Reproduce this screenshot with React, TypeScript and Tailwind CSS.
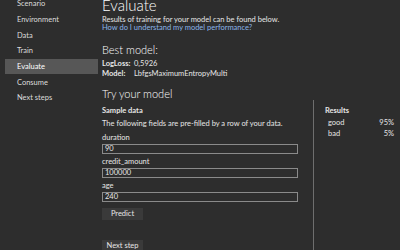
const steps = ['Scenario', 'Environment', 'Data', 'Train', 'Evaluate', 'Consume', 'Next steps'];

const fields = [
  { label: 'duration', value: '90' },
  { label: 'credit_amount', value: '100000' },
  { label: 'age', value: '240' },
];

const results = [
  { label: 'good', value: '95%' },
  { label: 'bad', value: '5%' },
];

export default function App() {
  return (
    <div
      className="flex w-[400px] h-[250px] overflow-hidden bg-[#2d2d2d] text-[#e6e6e6]"
      style={{ fontFamily: 'Lato, "Open Sans", sans-serif' }}
    >
      {/* left nav */}
      <div className="w-[98px] shrink-0 pl-[5px] mt-[-4px]">
        {steps.map((s) => (
          <div
            key={s}
            className={`h-[15.7px] flex items-center pl-[12px] text-[7.5px] ${
              s === 'Evaluate' ? 'bg-[#575757] text-white' : 'text-[#dcdcdc]'
            }`}
          >
            {s}
          </div>
        ))}
      </div>

      {/* main */}
      <div className="flex-1 pl-[4px]">
        <h1 className="text-[15px] font-light leading-[14px] mt-[-2px] text-white">Evaluate</h1>
        <p className="text-[7.5px] leading-[8px] mt-[4px]">Results of training for your model can be found below.</p>
        <a className="block text-[7.5px] leading-[8px] text-[#8ab4e8]">How do I understand my model performance?</a>

        <h2 className="text-[11px] font-light leading-[12px] mt-[12px] text-white">Best model:</h2>
        <div className="grid grid-cols-[32px_1fr] text-[7.5px] leading-[10px] mt-[3px]">
          <span className="font-bold">LogLoss:</span>
          <span>0,5926</span>
          <span className="font-bold">Model:</span>
          <span>LbfgsMaximumEntropyMulti</span>
        </div>

        <h2 className="text-[11px] font-light leading-[12px] mt-[9px] text-white">Try your model</h2>

        <div className="flex">
          <div className="w-[196px] pt-[7px]">
            <div className="text-[7.5px] font-bold leading-[8px]">Sample data</div>
            <p className="text-[7.5px] leading-[8px] mt-[5px]">The following fields are pre-filled by a row of your data.</p>
            <div className="mt-[6px] flex flex-col gap-[4px]">
              {fields.map((f) => (
                <div key={f.label}>
                  <div className="text-[7.5px] leading-[8px]">{f.label}</div>
                  <div className="mt-[2px] h-[10px] border border-[#8a8a8a] text-[7.5px] leading-[8px] pl-[2px]">
                    {f.value}
                  </div>
                </div>
              ))}
            </div>
            <button className="block mt-[6px] w-[41px] h-[12px] bg-[#3a3a3a] text-[7.5px] leading-[8px]">Predict</button>
            <button className="block mt-[20px] w-[41px] h-[12px] bg-[#3a3a3a] text-[7.5px] leading-[8px]">Next step</button>
          </div>

          <div className="ml-[15px] border-l border-[#6e6e6e] h-[160px] pl-[11px] pt-[7px] w-[85px]">
            <div className="text-[7.5px] font-bold leading-[8px]">Results</div>
            <div className="mt-[4px] flex flex-col gap-[3px] pl-[3px]">
              {results.map((r) => (
                <div key={r.label} className="flex justify-between pr-[4px] text-[7.5px] leading-[8px]">
                  <span>{r.label}</span>
                  <span>{r.value}</span>
                </div>
              ))}
            </div>
          </div>
        </div>
      </div>
    </div>
  );
}
